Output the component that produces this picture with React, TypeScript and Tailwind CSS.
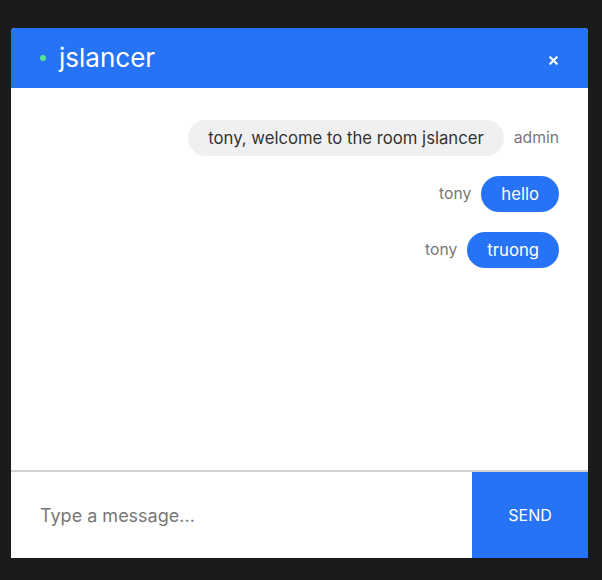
import { X } from "lucide-react";

const messages = [
  { user: "admin", text: "tony, welcome to the room jslancer", mine: false },
  { user: "tony", text: "hello", mine: true },
  { user: "tony", text: "truong", mine: true },
];

export default function App() {
  return (
    <div className="h-[580px] w-[602px] bg-[#1b1b1d] pl-[11px] pt-[28px] font-['Inter',sans-serif]">
      <div className="flex h-[530px] w-[577px] flex-col bg-white rounded-t-[4px]">
        <header className="flex h-[60px] items-center rounded-t-[4px] bg-[#2673f6] pl-[29px] pr-[28px]">
          <span className="h-[6px] w-[6px] rounded-full bg-[#56e394]" />
          <h1 className="ml-[13px] text-[26px] leading-none text-white">jslancer</h1>
          <button className="ml-auto mt-[5px] text-white">
            <X className="h-[13px] w-[13px]" strokeWidth={4} />
          </button>
        </header>

        <div className="flex flex-1 flex-col gap-5 pl-[30px] pr-[29px] pt-[32px]">
          {messages.map((m, i) =>
            m.mine ? (
              <div key={i} className="flex items-center justify-end gap-[10px]">
                <span className="text-[15.7px] text-[#777]">{m.user}</span>
                <span className="h-9 rounded-full bg-[#2673f6] px-5 text-[16.7px] leading-9 text-white">{m.text}</span>
              </div>
            ) : (
              <div key={i} className="flex items-center justify-end gap-[10px]">
                <span className="h-9 rounded-full bg-[#f0f0f0] px-5 text-[16.7px] leading-9 text-[#333]">{m.text}</span>
                <span className="text-[15.7px] text-[#777]">{m.user}</span>
              </div>
            )
          )}
        </div>

        <div className="flex h-[88px] border-t-2 border-[#d0d0d0]">
          <input
            className="flex-1 pl-[29px] text-[18px] text-[#333] outline-none placeholder:text-[#777]"
            placeholder="Type a message..."
          />
          <button className="w-[116px] bg-[#2673f6] text-[16px] text-white">SEND</button>
        </div>
      </div>
    </div>
  );
}
